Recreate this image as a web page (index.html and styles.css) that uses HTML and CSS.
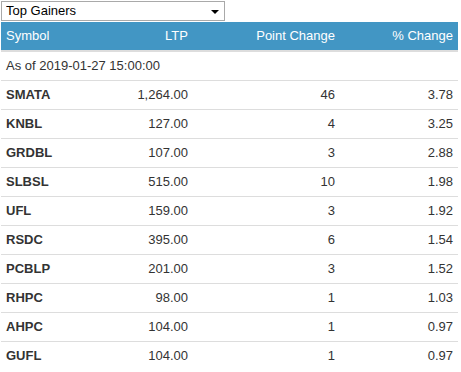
FILE: index.html
```html
<!DOCTYPE html>
<html>
<head>
<meta charset="utf-8">
<link rel="stylesheet" href="styles.css">
</head>
<body>
<div class="widget">
  <div class="picker">
    <select class="picker-select">
      <option>Top Gainers</option>
      <option>Top Losers</option>
    </select>
    <span class="picker-arrow"></span>
  </div>
  <table class="movers">
    <colgroup>
      <col class="c-sym"><col class="c-ltp"><col class="c-pt"><col class="c-pct">
    </colgroup>
    <thead>
      <tr>
        <th class="left">Symbol</th>
        <th class="num">LTP</th>
        <th class="num">Point Change</th>
        <th class="num">% Change</th>
      </tr>
    </thead>
    <tbody>
      <tr class="asof"><td colspan="4">As of 2019-01-27 15:00:00</td></tr>
      <tr><td class="sym">SMATA</td><td class="num">1,264.00</td><td class="num">46</td><td class="num">3.78</td></tr>
      <tr><td class="sym">KNBL</td><td class="num">127.00</td><td class="num">4</td><td class="num">3.25</td></tr>
      <tr><td class="sym">GRDBL</td><td class="num">107.00</td><td class="num">3</td><td class="num">2.88</td></tr>
      <tr><td class="sym">SLBSL</td><td class="num">515.00</td><td class="num">10</td><td class="num">1.98</td></tr>
      <tr><td class="sym">UFL</td><td class="num">159.00</td><td class="num">3</td><td class="num">1.92</td></tr>
      <tr><td class="sym">RSDC</td><td class="num">395.00</td><td class="num">6</td><td class="num">1.54</td></tr>
      <tr><td class="sym">PCBLP</td><td class="num">201.00</td><td class="num">3</td><td class="num">1.52</td></tr>
      <tr><td class="sym">RHPC</td><td class="num">98.00</td><td class="num">1</td><td class="num">1.03</td></tr>
      <tr><td class="sym">AHPC</td><td class="num">104.00</td><td class="num">1</td><td class="num">0.97</td></tr>
      <tr><td class="sym">GUFL</td><td class="num">104.00</td><td class="num">1</td><td class="num">0.97</td></tr>
    </tbody>
  </table>
</div>
</body>
</html>
```
FILE: styles.css
```css
html, body {
  margin: 0;
  padding: 0;
  background: #fff;
}
body {
  font-family: "Liberation Sans", Arial, sans-serif;
  font-size: 13px;
  color: #333;
}
.widget {
  padding: 1px 3px 0 1px;
}
.picker {
  position: relative;
  width: 224px;
  height: 20px;
  margin-bottom: 1px;
}
.picker-select {
  -webkit-appearance: none;
  appearance: none;
  display: block;
  width: 224px;
  height: 20px;
  margin: 0;
  padding: 0 0 0 4px;
  border: 1px solid #a9a9a9;
  border-radius: 0;
  background: #fff;
  font-family: "Liberation Sans", Arial, sans-serif;
  font-size: 13px;
  color: #000;
  line-height: 18px;
}
.picker-arrow {
  position: absolute;
  right: 6px;
  top: 9px;
  width: 0;
  height: 0;
  border-left: 4px solid transparent;
  border-right: 4px solid transparent;
  border-top: 4px solid #000;
  pointer-events: none;
}
.movers {
  width: 457px;
  border-collapse: collapse;
  table-layout: fixed;
}
.c-sym { width: 95px; }
.c-ltp { width: 97px; }
.c-pt { width: 147px; }
.c-pct { width: 118px; }
.movers th {
  background: #4296c4;
  color: #fff;
  font-weight: normal;
  padding: 5px;
  line-height: 18px;
  border-bottom: 2px solid #ddd;
}
.movers td {
  padding: 5px;
  line-height: 18px;
  border-top: 1px solid #ddd;
}
.movers tr.asof td {
  border-top: 0;
  padding-top: 5px;
  padding-bottom: 5px;
}
.left { text-align: left; }
.num { text-align: right; }
.sym { font-weight: bold; }
```
